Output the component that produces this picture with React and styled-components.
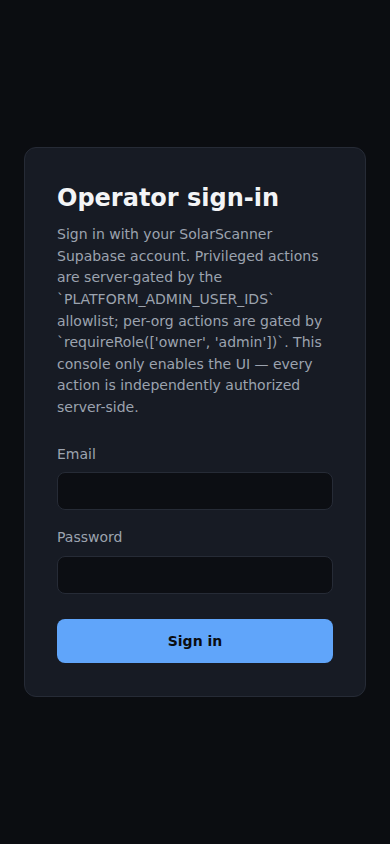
import styled, { createGlobalStyle } from 'styled-components';

const GlobalStyle = createGlobalStyle`
  html, body {
    margin: 0;
    padding: 0;
    background: #0b0d11;
  }
  body {
    font-family: 'DejaVu Sans', sans-serif;
  }
`;

const App = () => {
  return (
    <>
      <GlobalStyle />
      <StyledPage>
        <StyledCard>
          <h1>Operator sign-in</h1>
          <p>
            Sign in with your SolarScanner Supabase account. Privileged actions
            are server-gated by the `PLATFORM_ADMIN_USER_IDS` allowlist; per-org
            actions are gated by `requireRole(['owner', 'admin'])`. This console
            only enables the UI — every action is independently authorized
            server-side.
          </p>
          <StyledForm onSubmit={(e) => e.preventDefault()}>
            <StyledField>
              <label htmlFor="email">Email</label>
              <input id="email" type="email" />
            </StyledField>
            <StyledField>
              <label htmlFor="password">Password</label>
              <input id="password" type="password" />
            </StyledField>
            <StyledButton type="submit">Sign in</StyledButton>
          </StyledForm>
        </StyledCard>
      </StyledPage>
    </>
  );
};

const StyledPage = styled.div`
  min-height: 100vh;
  display: flex;
  align-items: center;
  justify-content: center;
  padding: 0 24px;
  box-sizing: border-box;
`;

const StyledCard = styled.div`
  width: 100%;
  box-sizing: border-box;
  padding: 32px 32px 33px;
  background: #171b24;
  border: 1px solid #262b36;
  border-radius: 12px;

  h1 {
    margin: 0 0 8px;
    font-size: 24px;
    line-height: 1.5;
    font-weight: 700;
    color: #f3f4f6;
  }

  p {
    margin: 0 0 27px;
    font-size: 14px;
    line-height: 1.54;
    color: #9ca3af;
  }
`;

const StyledForm = styled.form`
  display: flex;
  flex-direction: column;
  gap: 18px;
`;

const StyledField = styled.div`
  display: flex;
  flex-direction: column;
  gap: 9px;

  label {
    font-size: 14px;
    line-height: 1.3;
    color: #9ca3af;
  }

  input {
    height: 38px;
    box-sizing: border-box;
    background: #0c0e13;
    border: 1px solid #262b36;
    border-radius: 8px;
    color: #f3f4f6;
    padding: 0 12px;
    font-family: inherit;
    font-size: 14px;
    outline: none;
  }
`;

const StyledButton = styled.button`
  margin-top: 7px;
  height: 44px;
  border: none;
  border-radius: 8px;
  background: #60a5fa;
  color: #0b0d11;
  font-family: inherit;
  font-size: 14px;
  font-weight: 700;
  cursor: pointer;
`;

export default App;
